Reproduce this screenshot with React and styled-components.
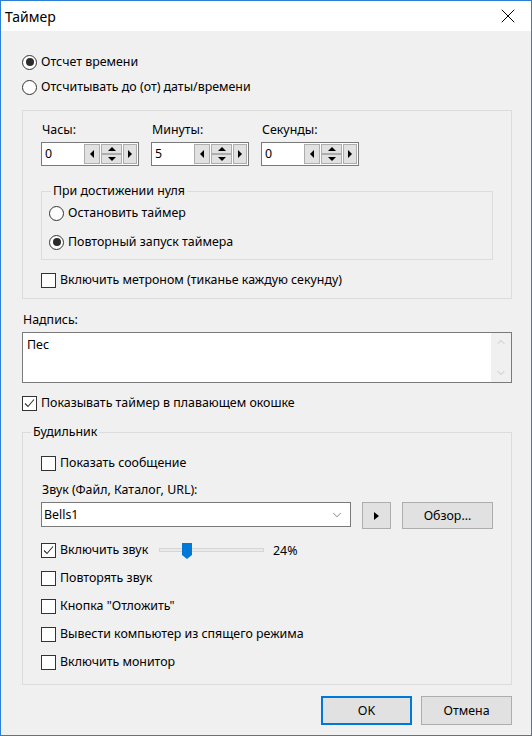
import React from 'react';
import styled, { createGlobalStyle, css } from 'styled-components';
import { X, ChevronDown, ChevronUp } from 'lucide-react';

const GlobalStyle = createGlobalStyle`
  html, body {
    margin: 0;
    padding: 0;
    background: #fff;
  }
  body {
    font-family: "Noto Sans", "Liberation Sans", sans-serif;
    font-size: 12.4px;
    color: #000;
  }
  * {
    box-sizing: border-box;
  }
`;

const Window = styled.div`
  width: 532px;
  height: 736px;
  border: 1px solid #2b7fd4;
  background: #f0f0f0;
  display: flex;
  flex-direction: column;
`;

const TitleBar = styled.div`
  height: 30px;
  flex: none;
  background: #fff;
  display: flex;
  align-items: center;
  justify-content: space-between;
  padding-left: 4px;
  font-size: 14px;
`;

const CloseButton = styled.div`
  width: 46px;
  height: 30px;
  display: flex;
  align-items: center;
  justify-content: center;
`;

const Content = styled.div`
  flex: 1;
  display: flex;
  flex-direction: column;
  padding: 21px 19px 0 21px;
`;

const Option = styled.div`
  display: flex;
  align-items: center;
  gap: 4px;
  height: 20px;
  line-height: 16px;
  white-space: nowrap;
  margin-top: ${(p) => p.$mt || 0}px;
  width: ${(p) => (p.$w ? `${p.$w}px` : 'auto')};
  flex: none;
`;

const RadioMark = styled.span`
  width: 15px;
  height: 15px;
  flex: none;
  border-radius: 50%;
  border: 1px solid #333;
  background: #fff;
  display: flex;
  align-items: center;
  justify-content: center;
  &::after {
    content: '';
    width: 8px;
    height: 8px;
    border-radius: 50%;
    background: #2b2b2b;
    display: ${(p) => (p.$on ? 'block' : 'none')};
  }
`;

const CheckMark = styled.span`
  width: 15px;
  height: 15px;
  flex: none;
  border: 1px solid #333;
  background: #fff;
  display: flex;
  align-items: center;
  justify-content: center;
`;

const Panel = styled.div`
  border: 1px solid #dcdcdc;
  margin-top: 13px;
  padding: 11px 18px 8px;
  display: flex;
  flex-direction: column;
`;

const SpinRow = styled.div`
  display: flex;
  gap: 12px;
`;

const SpinColumn = styled.div`
  display: flex;
  flex-direction: column;
  gap: 4px;
`;

const Label = styled.div`
  line-height: 16px;
  padding-left: 1px;
  margin-top: ${(p) => p.$mt || 0}px;
`;

const SpinBox = styled.div`
  width: 98px;
  height: 24px;
  border: 1px solid #7a7a7a;
  background: #fff;
  display: flex;
  align-items: stretch;
`;

const SpinValue = styled.div`
  flex: 1;
  padding-left: 3px;
  line-height: 22px;
`;

const SpinButtons = styled.div`
  display: flex;
  gap: 1px;
  padding: 1px;
`;

const SpinButton = styled.div`
  width: ${(p) => p.$w}px;
  height: ${(p) => p.$h || 20}px;
  background: #e1e1e1;
  border: 1px solid #adadad;
  display: flex;
  align-items: center;
  justify-content: center;
`;

const UpDown = styled.div`
  display: flex;
  flex-direction: column;
`;

const Arrow = styled.span`
  width: 0;
  height: 0;
  border-style: solid;
  border-color: transparent;
  ${(p) =>
    p.$dir === 'left' &&
    css`
      border-width: 4px ${p.$s || 4}px 4px 0;
      border-right-color: #000;
    `}
  ${(p) =>
    p.$dir === 'right' &&
    css`
      border-width: 4px 0 4px ${p.$s || 4}px;
      border-left-color: #000;
    `}
  ${(p) =>
    p.$dir === 'up' &&
    css`
      border-width: 0 4px 4px 4px;
      border-bottom-color: #000;
    `}
  ${(p) =>
    p.$dir === 'down' &&
    css`
      border-width: 4px 4px 0 4px;
      border-top-color: #000;
    `}
`;

const GroupBox = styled.fieldset`
  margin: ${(p) => p.$mt || 0}px 0 0;
  padding: ${(p) => p.$pad};
  border: 1px solid #dcdcdc;
  min-width: 0;
  display: flex;
  flex-direction: column;
`;

const Legend = styled.legend`
  margin-left: ${(p) => p.$offset}px;
  padding: 0 2px;
  line-height: 16px;
`;

const Memo = styled.div`
  height: 51px;
  margin-top: 4px;
  border: 1px solid #7a7a7a;
  background: #fff;
  display: flex;
`;

const MemoText = styled.div`
  flex: 1;
  padding: 4px 4px;
  line-height: 16px;
`;

const ScrollBar = styled.div`
  width: 20px;
  background: #f0f0f0;
  display: flex;
  flex-direction: column;
  justify-content: space-between;
  align-items: center;
  padding: 3px 0;
  color: #b4b4b4;
`;

const SoundRow = styled.div`
  display: flex;
  align-items: flex-start;
  gap: 11px;
  margin-top: 4px;
`;

const Combo = styled.div`
  width: 310px;
  height: 25px;
  border: 1px solid #7a7a7a;
  background: #fff;
  display: flex;
  align-items: center;
  justify-content: space-between;
  padding: 0 6px 0 2px;
`;

const Button = styled.div`
  width: ${(p) => p.$w}px;
  height: ${(p) => p.$h || 27}px;
  background: #e1e1e1;
  border: ${(p) => (p.$default ? '2px solid #0078d7' : '1px solid #adadad')};
  display: flex;
  align-items: center;
  justify-content: center;
`;

const VolumeRow = styled.div`
  display: flex;
  align-items: center;
  margin-top: 11px;
`;

const Slider = styled.div`
  position: relative;
  width: 105px;
  height: 20px;
  display: flex;
  align-items: center;
`;

const Track = styled.div`
  width: 100%;
  height: 4px;
  background: #e7eaea;
  border: 1px solid #d6d6d6;
`;

const Thumb = styled.div`
  position: absolute;
  top: 3px;
  width: 10px;
  height: 16px;
  background: #0078d7;
  clip-path: polygon(0 0, 100% 0, 100% 75%, 50% 100%, 0 75%);
`;

const Percent = styled.span`
  margin-left: 9px;
`;

const Footer = styled.div`
  display: flex;
  justify-content: flex-end;
  gap: 9px;
  margin-top: 11px;
`;

const Radio = ({ on, children, mt }) => (
  <Option $mt={mt}>
    <RadioMark $on={on} />
    <span>{children}</span>
  </Option>
);

const Check = ({ on, children, mt, w }) => (
  <Option $mt={mt} $w={w}>
    <CheckMark>
      {on && (
        <svg width="13" height="13" viewBox="0 0 13 13">
          <polyline points="2,6.5 5,9.5 11,2.5" fill="none" stroke="#333" strokeWidth="1.1" />
        </svg>
      )}
    </CheckMark>
    <span>{children}</span>
  </Option>
);

const Spinner = ({ label, value }) => (
  <SpinColumn>
    <Label>{label}</Label>
    <SpinBox>
      <SpinValue>{value}</SpinValue>
      <SpinButtons>
        <SpinButton $w={16}>
          <Arrow $dir="left" />
        </SpinButton>
        <UpDown>
          <SpinButton $w={21} $h={10}>
            <Arrow $dir="up" />
          </SpinButton>
          <SpinButton $w={21} $h={10}>
            <Arrow $dir="down" />
          </SpinButton>
        </UpDown>
        <SpinButton $w={14}>
          <Arrow $dir="right" />
        </SpinButton>
      </SpinButtons>
    </SpinBox>
  </SpinColumn>
);

const volume = 24;

export default function App() {
  return (
    <>
      <GlobalStyle />
      <Window>
        <TitleBar>
          <span>Таймер</span>
          <CloseButton>
            <X size={24} strokeWidth={1} color="#000" />
          </CloseButton>
        </TitleBar>
        <Content>
          <Radio on>Отсчет времени</Radio>
          <Radio mt={5}>Отсчитывать до (от) даты/времени</Radio>

          <Panel>
            <SpinRow>
              <Spinner label="Часы:" value="0" />
              <Spinner label="Минуты:" value="5" />
              <Spinner label="Секунды:" value="0" />
            </SpinRow>
            <GroupBox $mt={17} $pad="4px 7px 7px">
              <Legend $offset={2}>При достижении нуля</Legend>
              <Radio>Остановить таймер</Radio>
              <Radio on mt={9}>
                Повторный запуск таймера
              </Radio>
            </GroupBox>
            <Check mt={10}>Включить метроном (тиканье каждую секунду)</Check>
          </Panel>

          <Label $mt={13}>Надпись:</Label>
          <Memo>
            <MemoText>Пес</MemoText>
            <ScrollBar>
              <ChevronUp size={12} strokeWidth={1.5} />
              <ChevronDown size={12} strokeWidth={1.5} />
            </ScrollBar>
          </Memo>
          <Check on mt={10}>
            Показывать таймер в плавающем окошке
          </Check>

          <GroupBox $mt={11} $pad="13px 18px 12px">
            <Legend $offset={-10}>Будильник</Legend>
            <Check>Показать сообщение</Check>
            <Label $mt={9}>Звук (Файл, Каталог, URL):</Label>
            <SoundRow>
              <Combo>
                <span>Bells1</span>
                <ChevronDown size={14} strokeWidth={1} color="#333" />
              </Combo>
              <Button $w={29}>
                <Arrow $dir="right" $s={5} />
              </Button>
              <Button $w={91}>Обзор...</Button>
            </SoundRow>
            <VolumeRow>
              <Check on w={118}>
                Включить звук
              </Check>
              <Slider>
                <Track />
                <Thumb style={{ left: Math.round((volume / 100) * 95) }} />
              </Slider>
              <Percent>{volume}%</Percent>
            </VolumeRow>
            <Check mt={8}>Повторять звук</Check>
            <Check mt={8}>Кнопка "Отложить"</Check>
            <Check mt={8}>Вывести компьютер из спящего режима</Check>
            <Check mt={8}>Включить монитор</Check>
          </GroupBox>

          <Footer>
            <Button $w={91} $h={29} $default>
              OK
            </Button>
            <Button $w={91} $h={29}>
              Отмена
            </Button>
          </Footer>
        </Content>
      </Window>
    </>
  );
}
